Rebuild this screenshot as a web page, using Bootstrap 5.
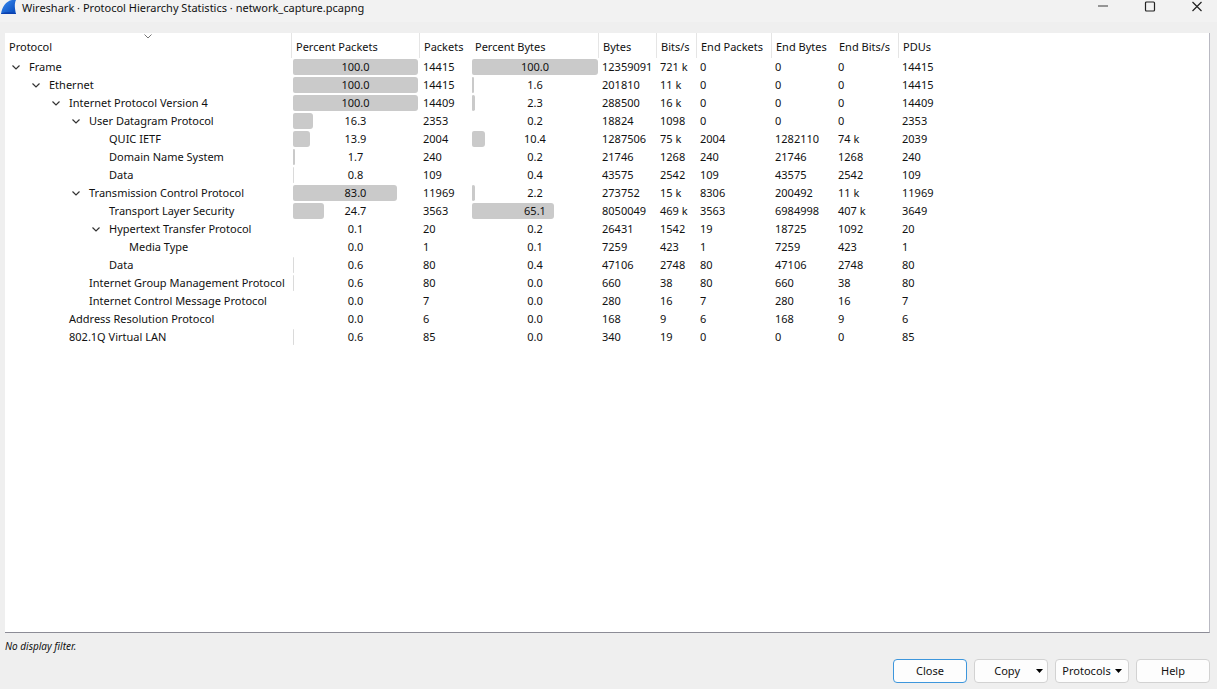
<!DOCTYPE html>
<html lang="en">
<head>
<meta charset="utf-8">
<meta name="viewport" content="width=device-width, initial-scale=1">
<title>Wireshark · Protocol Hierarchy Statistics</title>
<link href="https://cdn.jsdelivr.net/npm/bootstrap@5.3.0/dist/css/bootstrap.min.css" rel="stylesheet">
<style>
  body { font: 11px/18px "Noto Sans", "Open Sans", sans-serif; color: #111; background: #efefef; }
  .title-bar { height: 22px; background: #f2f2f2; padding-right: 14px; }
  .title-bar h1 { font-size: 11px; line-height: 15px; }
  .win-btn { width: 12px; height: 12px; }
  .tree-view { margin: 11px 7px 0 5px; background: #fff; border-right: 1px solid #b9b9c2; border-bottom: 1px solid #8c8c96; }
  .stats { table-layout: fixed; width: 100%; border-collapse: separate; border-spacing: 0; white-space: nowrap; }
  .stats th { height: 25px; padding: 2px 0 0 4px; font-weight: 400; position: relative; }
  .stats th.edge { border-right: 1px solid #e5e5e5; }
  .stats td { height: 18px; padding: 0 0 0 3px; line-height: 18px; }
  .stats td.bar-cell { padding: 0 2px 0 1px; }
  .stats td.bar-cell:nth-child(4) { padding-right: 1px; }
  .c-protocol { width: 287px; } .c-percent { width: 128px; } .c-packets { width: 51px; }
  .c-bytes { width: 58px; } .c-bits { width: 40px; } .c-endp { width: 75px; }
  .c-endb { width: 63px; } .c-endbits { width: 64px; }
  .sort-mark { position: absolute; top: 1px; left: 0; right: 0; margin: 0 auto; width: 8px; height: 5px; }
  .twisty { width: 10px; height: 10px; margin-right: 8px; }
  .proto { padding-left: calc(3px + var(--level) * 20px); }
  .meter-box { display: grid; height: 18px; align-items: center; }
  .meter-box > * { grid-area: 1 / 1; }
  .meter-fill { height: 16px; background: #cacaca; border-radius: 2px 3px 3px 2px; }
  .status { padding: 4px 5px 0; font-style: italic; font-size: 10px; }
  .actions { padding: 4px 7px 6px; gap: 7px; }
  .dlg-btn { --bs-btn-padding-x: 0; --bs-btn-padding-y: 0; --bs-btn-font-size: 11px; --bs-btn-line-height: 20px;
    --bs-btn-color: #111; --bs-btn-bg: #fdfdfd; --bs-btn-border-color: #d2d2d2; --bs-btn-border-radius: 4px;
    --bs-btn-hover-bg: #f4f9fd; --bs-btn-hover-border-color: #3d96dc; width: 74px; height: 24px; }
  .dlg-btn.default { --bs-btn-border-color: #3d96dc; }
  .dlg-btn svg { width: 7px; height: 4px; }
</style>
</head>
<body class="d-flex flex-column min-vh-100">
<header class="title-bar d-flex align-items-start">
  <svg width="18" height="14" viewBox="0 0 18 14" aria-hidden="true">
    <defs><linearGradient id="fin" x1="0" y1="0" x2="1" y2="1"><stop offset="0" stop-color="#3a8df2"/><stop offset="1" stop-color="#0546b8"/></linearGradient></defs>
    <path d="M1 14C2 7 6 1 12 0h4c-2 4-1 9 0 14z" fill="url(#fin)"/>
    <path d="M1 13.500Q8 11 16 13.500V14H1z" fill="#0a3fae"/>
  </svg>
  <h1 class="m-0 ms-1 fw-normal">Wireshark · Protocol Hierarchy Statistics · network_capture.pcapng</h1>
  <div class="ms-auto d-flex" style="gap:35px">
    <button class="btn p-0 border-0 win-btn d-flex" aria-label="Minimize"><svg width="12" height="12"><path d="M1 6h10" stroke="#777" stroke-width="1.500"/></svg></button>
    <button class="btn p-0 border-0 win-btn d-flex" aria-label="Maximize"><svg width="12" height="12"><rect x="1.500" y="2" width="9" height="9" rx="1" fill="none" stroke="#222" stroke-width="1.200"/></svg></button>
    <button class="btn p-0 border-0 win-btn d-flex" aria-label="Close window"><svg width="12" height="12"><path d="M1.500 2l9 9M10.500 2l-9 9" stroke="#222" stroke-width="1.200"/></svg></button>
  </div>
</header>
<main class="tree-view flex-grow-1">
  <table class="stats">
    <colgroup><col class="c-protocol"><col class="c-percent"><col class="c-packets"><col class="c-percent"><col class="c-bytes"><col class="c-bits"><col class="c-endp"><col class="c-endb"><col class="c-endbits"><col></colgroup>
    <thead>
      <tr>
        <th class="edge" scope="col">Protocol<svg class="sort-mark" viewBox="0 0 8 5" aria-hidden="true"><path d="M.5.500L4 4 7.500.500" fill="none" stroke="#777"/></svg></th>
        <th class="edge" scope="col">Percent Packets</th><th scope="col">Packets</th><th class="edge" scope="col">Percent Bytes</th>
        <th class="edge" scope="col">Bytes</th><th class="edge" scope="col">Bits/s</th><th class="edge" scope="col">End Packets</th>
        <th scope="col">End Bytes</th><th class="edge" scope="col">End Bits/s</th><th scope="col">PDUs</th>
      </tr>
    </thead>
    <tbody id="rows"></tbody>
  </table>
</main>
<p class="status m-0">No display filter.</p>
<footer class="actions d-flex justify-content-end">
  <button type="button" class="btn dlg-btn default">Close</button>
  <button type="button" class="btn dlg-btn d-flex align-items-center justify-content-end pe-1"><span class="me-3">Copy</span><svg viewBox="0 0 7 4"><path d="M0 0h7L3.500 4z"/></svg></button>
  <button type="button" class="btn dlg-btn d-flex align-items-center justify-content-center gap-1"><span>Protocols</span><svg viewBox="0 0 7 4"><path d="M0 0h7L3.500 4z"/></svg></button>
  <button type="button" class="btn dlg-btn">Help</button>
</footer>
<script src="https://cdn.jsdelivr.net/npm/bootstrap@5.3.0/dist/js/bootstrap.bundle.min.js"></script>
<script>
  // level, has children, protocol, % packets, packets, % bytes, bytes, bits/s, end packets, end bytes, end bits/s, PDUs
  const data = [
    [0,1,'Frame','100.0','14415','100.0','12359091','721 k','0','0','0','14415'],
    [1,1,'Ethernet','100.0','14415','1.6','201810','11 k','0','0','0','14415'],
    [2,1,'Internet Protocol Version 4','100.0','14409','2.3','288500','16 k','0','0','0','14409'],
    [3,1,'User Datagram Protocol','16.3','2353','0.2','18824','1098','0','0','0','2353'],
    [4,0,'QUIC IETF','13.9','2004','10.4','1287506','75 k','2004','1282110','74 k','2039'],
    [4,0,'Domain Name System','1.7','240','0.2','21746','1268','240','21746','1268','240'],
    [4,0,'Data','0.8','109','0.4','43575','2542','109','43575','2542','109'],
    [3,1,'Transmission Control Protocol','83.0','11969','2.2','273752','15 k','8306','200492','11 k','11969'],
    [4,0,'Transport Layer Security','24.7','3563','65.1','8050049','469 k','3563','6984998','407 k','3649'],
    [4,1,'Hypertext Transfer Protocol','0.1','20','0.2','26431','1542','19','18725','1092','20'],
    [5,0,'Media Type','0.0','1','0.1','7259','423','1','7259','423','1'],
    [4,0,'Data','0.6','80','0.4','47106','2748','80','47106','2748','80'],
    [3,0,'Internet Group Management Protocol','0.6','80','0.0','660','38','80','660','38','80'],
    [3,0,'Internet Control Message Protocol','0.0','7','0.0','280','16','7','280','16','7'],
    [2,0,'Address Resolution Protocol','0.0','6','0.0','168','9','6','168','9','6'],
    [2,0,'802.1Q Virtual LAN','0.6','85','0.0','340','19','0','0','0','85']
  ];
  const chevron = '<svg viewBox="0 0 10 10" class="w-100 h-100 d-block"><path d="M1.500 3.500L5 7l3.500-3.500" fill="none" stroke="#333" stroke-width="1.200"/></svg>';
  const meter = v => `<td class="bar-cell"><div class="meter-box">${v >= 0.5 ? `<div class="meter-fill" style="width:${v}%;opacity:${v < 1 ? 0.7 : 1}"></div>` : ''}<span class="text-center">${v}</span></div></td>`;
  document.getElementById('rows').innerHTML = data.map(([level, open, name, ...v]) =>
    `<tr><td><div class="proto d-flex align-items-center" style="--level:${level}"><span class="twisty flex-shrink-0">${open ? chevron : ''}</span>${name}</div></td>` +
    v.map((x, i) => i === 0 || i === 2 ? meter(x) : `<td>${x}</td>`).join('') + '</tr>').join('');
</script>
</body>
</html>
